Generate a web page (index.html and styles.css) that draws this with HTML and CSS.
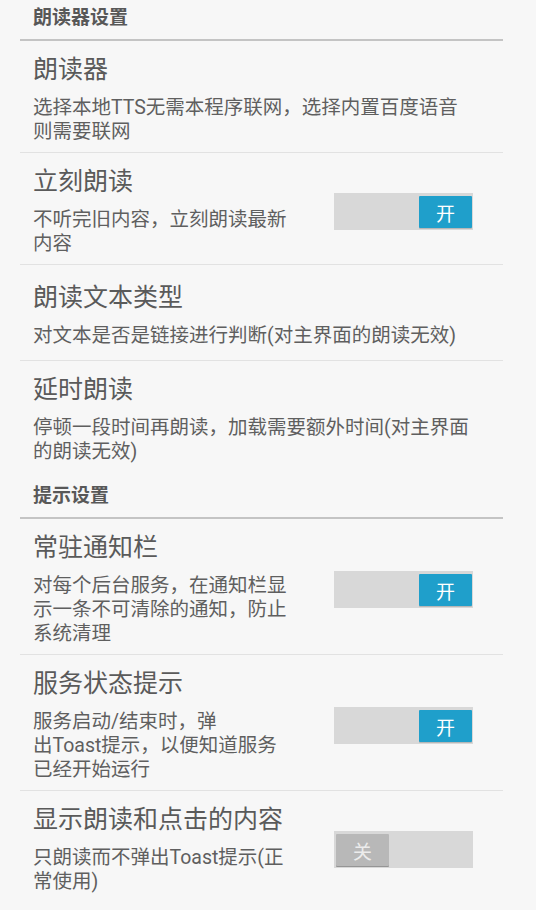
FILE: index.html
```html
<!DOCTYPE html>
<html lang="zh-CN">
<head>
  <meta charset="UTF-8">
  <meta name="viewport" content="width=device-width, initial-scale=1.0">
  <title>朗读设置</title>
  <link rel="stylesheet" href="styles.css">
</head>
<body>
<div class="category">
  <div class="category-title">朗读器设置</div>
  <div class="pref">
    <div class="pref-text">
      <div class="pref-title">朗读器</div>
      <div class="pref-summary">选择本地TTS无需本程序联网，选择内置百度语音则需要联网</div>
    </div>
  </div>
  <div class="pref">
    <div class="pref-text">
      <div class="pref-title">立刻朗读</div>
      <div class="pref-summary">不听完旧内容，立刻朗读最新内容</div>
    </div>
    <div class="switch on"><span class="switch-thumb">开</span></div>
  </div>
  <div class="pref">
    <div class="pref-text">
      <div class="pref-title">朗读文本类型</div>
      <div class="pref-summary">对文本是否是链接进行判断(对主界面的朗读无效)</div>
    </div>
  </div>
  <div class="pref">
    <div class="pref-text">
      <div class="pref-title">延时朗读</div>
      <div class="pref-summary">停顿一段时间再朗读，加载需要额外时间(对主界面的朗读无效)</div>
    </div>
  </div>
</div>

<div class="category">
  <div class="category-title">提示设置</div>
  <div class="pref">
    <div class="pref-text">
      <div class="pref-title">常驻通知栏</div>
      <div class="pref-summary">对每个后台服务，在通知栏显示一条不可清除的通知，防止系统清理</div>
    </div>
    <div class="switch on"><span class="switch-thumb">开</span></div>
  </div>
  <div class="pref">
    <div class="pref-text">
      <div class="pref-title">服务状态提示</div>
      <div class="pref-summary">服务启动/结束时，弹出&#8288;Toast&#8288;提&#8288;示，以便知道服务已经开始运行</div>
    </div>
    <div class="switch on"><span class="switch-thumb">开</span></div>
  </div>
  <div class="pref">
    <div class="pref-text">
      <div class="pref-title">显示朗读和点击的内容</div>
      <div class="pref-summary">只朗读而不弹出Toast提示(正常使用)</div>
    </div>
    <div class="switch off"><span class="switch-thumb">关</span></div>
  </div>
</div>
</body>
</html>
```

FILE: styles.css
```css
body {
  margin: 0;
  padding: 0;
  background-color: #f7f7f7;
  color: #5a5a5a;
  font-family: Roboto, 'Noto Sans CJK SC', sans-serif;
}

.category {
  margin: 0 33px 0 20px;
}

.category + .category {
  margin-top: 6px;
}

.category-title {
  padding: 6px 0 9px 13px;
  font-size: 19px;
  font-weight: bold;
  line-height: 24px;
  color: #585858;
  border-bottom: 2px solid #c4c4c4;
}

.pref {
  display: flex;
  align-items: center;
  box-sizing: border-box;
  min-height: 96px;
  padding: 14px 30px 8px 13px;
  border-bottom: 1px solid #e2e2e2;
}

.pref:last-child {
  border-bottom: none;
}

.pref-text {
  flex: 1;
  min-width: 0;
}

.pref-title {
  font-size: 25px;
  line-height: 30px;
}

.pref-summary {
  margin-top: 11px;
  font-size: 19.5px;
  line-height: 24px;
  color: #5f5f5f;
}

/* on/off switch like the old holo toggle */
.switch {
  flex: none;
  display: flex;
  justify-content: flex-end;
  box-sizing: border-box;
  width: 139px;
  height: 37px;
  margin-left: 43px;
  padding: 3px 1px 2px 2px;
  background-color: #d8d8d8;
}

.switch.off {
  justify-content: flex-start;
}

.switch-thumb {
  display: flex;
  align-items: center;
  justify-content: center;
  width: 53px;
  height: 32px;
  font-size: 19px;
  color: #fff;
  background-color: #1f9fcb;
  border-radius: 1px;
  box-shadow: 0 1px 0 rgba(0, 0, 0, 0.15);
}

.switch.off .switch-thumb {
  color: #ececec;
  background-color: #b8b8b8;
  box-shadow: 0 1px 0 #959595;
}
```
